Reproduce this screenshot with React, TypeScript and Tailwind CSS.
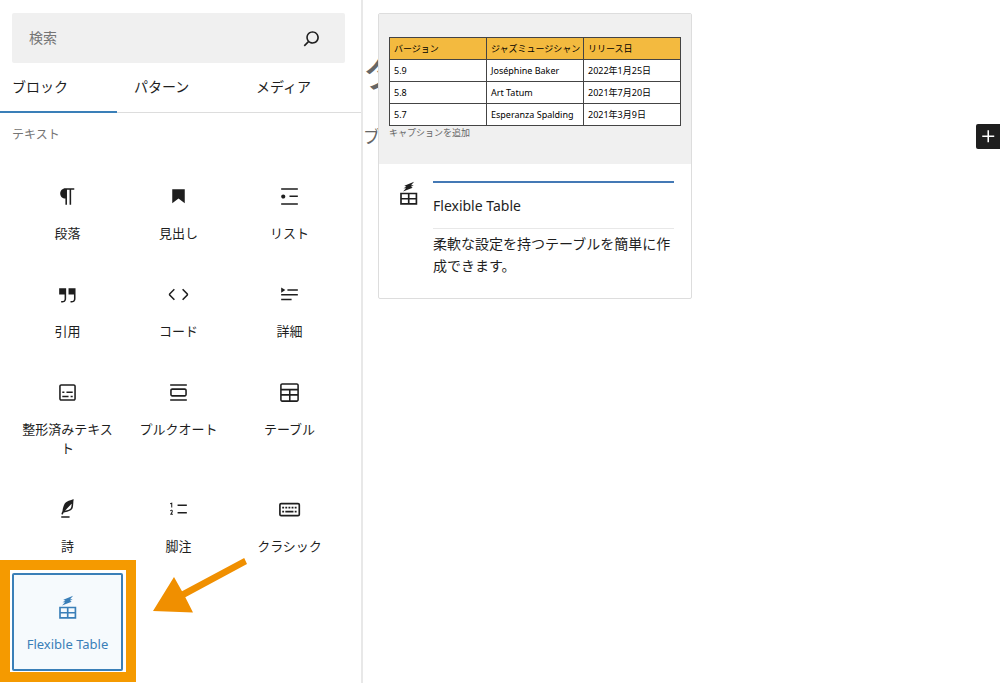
import type { ReactNode } from "react";

interface Block {
  name: string;
  icon: ReactNode;
  highlighted?: boolean;
}

function Icon({ children }: { children: ReactNode }) {
  return (
    <svg viewBox="0 0 24 24" className="size-[25px] shrink-0" fill="currentColor" aria-hidden="true">
      {children}
    </svg>
  );
}

const flexibleTableIcon = (
  <Icon>
    <path d="M17.4.6 8 4.6 10 5.4 7.2 7h2.4L6.8 10l9.2-3.6-1.6-.9L17 4h-2.6z" />
    <path d="M4 11.2h16.4v11.6H4zm1.6 1.6v3.4h5.8v-3.4zm7.4 0v3.4h5.8v-3.4zm-7.4 5v3.4h5.8v-3.4zm7.4 0v3.4h5.8v-3.4z" fillRule="evenodd" />
  </Icon>
);

const blocks: Block[] = [
  {
    name: "段落",
    icon: <Icon><path d="m9.99609 14v-.2251l.00391.0001v6.225h1.5v-14.5h2.5v14.5h1.5v-14.5h3v-1.5h-8.50391c-2.76142 0-5 2.23858-5 5 0 2.7614 2.23858 5 5 5z" /></Icon>,
  },
  { name: "見出し", icon: <Icon><path d="M6 5V18.5911L12 13.8473L18 18.5911V5H6Z" /></Icon> },
  {
    name: "リスト",
    icon: <Icon><path d="M4 4v1.5h16V4H4zm8 8.5h8V11h-8v1.5zM4 20h16v-1.5H4V20zm4-8c0-1.1-.9-2-2-2s-2 .9-2 2 .9 2 2 2 2-.9 2-2z" /></Icon>,
  },
  {
    name: "引用",
    icon: <Icon><path d="M13 6v6h5.2v4c0 .8-.2 1.4-.5 1.7-.6.6-1.6.6-2.5.5h-.3v1.5h.5c1 0 2.3-.1 3.3-1 .6-.6 1-1.6 1-2.8V6H13zm-9 6h5.2v4c0 .8-.2 1.4-.5 1.7-.6.6-1.6.6-2.5.5h-.3v1.5h.5c1 0 2.3-.1 3.3-1 .6-.6 1-1.6 1-2.8V6H4v6z" /></Icon>,
  },
  {
    name: "コード",
    icon: <Icon><path d="M20.8 10.7l-4.3-4.3-1.1 1.1 4.3 4.3c.1.1.1.3 0 .4l-4.3 4.3 1.1 1.1 4.3-4.3c.7-.8.7-1.9 0-2.6zM4.2 11.8l4.3-4.3-1-1-4.3 4.3c-.7.7-.7 1.8 0 2.5l4.3 4.3 1.1-1.1-4.3-4.3c-.2-.1-.2-.3-.1-.4z" /></Icon>,
  },
  {
    name: "詳細",
    icon: <Icon><path d="M4 16h10v1.5H4V16Zm0-4.5h16V13H4v-1.5ZM10 7h10v1.5H10V7Z" /><path d="m4 5.25 4 2.5-4 2.5v-5Z" /></Icon>,
  },
  {
    name: "整形済みテキスト",
    icon: <Icon><path d="M18 4H6c-1.1 0-2 .9-2 2v12c0 1.1.9 2 2 2h12c1.1 0 2-.9 2-2V6c0-1.1-.9-2-2-2zm.5 14c0 .3-.2.5-.5.5H6c-.3 0-.5-.2-.5-.5V6c0-.3.2-.5.5-.5h12c.3 0 .5.2.5.5v12z" /><path d="M7 16.5h6V15H7v1.5zm4-4h6V11h-6v1.5zM9 11H7v1.5h2V11zm6 5.5h2V15h-2v1.5z" /></Icon>,
  },
  {
    name: "プルクオート",
    icon: <Icon><path d="M18 8H6c-1.1 0-2 .9-2 2v4c0 1.1.9 2 2 2h12c1.1 0 2-.9 2-2v-4c0-1.1-.9-2-2-2zm.5 6c0 .3-.2.5-.5.5H6c-.3 0-.5-.2-.5-.5v-4c0-.3.2-.5.5-.5h12c.3 0 .5.2.5.5v4zM4 4v1.5h16V4H4zm0 16h16v-1.5H4V20z" /></Icon>,
  },
  {
    name: "テーブル",
    icon: <Icon><path d="M19 3H5c-1.1 0-2 .9-2 2v14c0 1.1.9 2 2 2h14c1.1 0 2-.9 2-2V5c0-1.1-.9-2-2-2zM5 4.5h14c.3 0 .5.2.5.5v3.5h-15V5c0-.3.2-.5.5-.5zm8 5.5h6.5v3.5H13V10zm-1.5 3.5h-7V10h7v3.5zm-7 5.5v-4h7v4.5H5c-.3 0-.5-.2-.5-.5zm14.5.5h-6V15h6.5v4c0 .3-.2.5-.5.5z" /></Icon>,
  },
  {
    name: "詩",
    icon: <Icon><path d="M17.8 2l-.9.3c-.1 0-3.6 1-5.2 2.1C10 5.5 9.3 6.5 8.9 7.1c-.6.9-1.7 4.7-1.7 6.3l-.9 2.3c-.2.4 0 .8.4 1 .1 0 .2.1.3.1.3 0 .6-.2.7-.5l.6-1.5c.3 0 .7-.1 1.2-.2.7-.1 1.4-.3 2.2-.5.8-.2 1.6-.5 2.4-.8.7-.3 1.4-.7 1.9-1.2s.8-1.2 1-1.9c.2-.7.3-1.6.4-2.4.1-.8.1-1.7.2-2.5 0-.8.1-1.5.2-2.1V2zm-1.9 5.6c-.1.8-.2 1.5-.3 2.1-.2.6-.4 1-.6 1.3-.3.3-.8.6-1.4.9-.7.3-1.4.5-2.2.8-.6.2-1.3.3-1.8.4L15 7.5c.3-.3.6-.7 1-1.1 0 .4 0 .8-.1 1.2zM6 20h8v-1.5H6V20z" /></Icon>,
  },
  {
    name: "脚注",
    icon: <Icon><path d="M11.1 15.8H20v-1.5h-8.9v1.5zm0-8.6v1.5H20V7.2h-8.9zM5 6.7V10h1V5.3L3.8 6l.4 1 .8-.3zm-.4 5.7c-.3.1-.5.2-.7.3l.1 1.1c.2-.2.5-.4.8-.5.3-.1.6 0 .7.1.2.3 0 .8-.2 1.1-.5.8-.9 1.6-1.4 2.5h2.7v-1h-1c.3-.6.8-1.4.9-2.1.1-.3 0-.8-.2-1.1-.5-.6-1.3-.5-1.7-.4z" /></Icon>,
  },
  {
    name: "クラシック",
    icon: (
      <Icon>
        <rect x="2.8" y="6.3" width="18.6" height="11.6" rx="1.2" fill="none" stroke="currentColor" strokeWidth="1.6" />
        <path d="M5 9.4h1.8v1.6H5zm3 0h1.8v1.6H8zm3 0h1.8v1.6H11zm3 0h1.8v1.6H14zm3 0h1.8v1.6H17zM5 13.2h1.8v1.6H5zm3 0h7.8v1.6H8zm9 0h1.8v1.6H17z" />
      </Icon>
    ),
  },
  { name: "Flexible Table", icon: flexibleTableIcon, highlighted: true },
];

const releases = [
  ["5.9", "Joséphine Baker", "2022年1月25日"],
  ["5.8", "Art Tatum", "2021年7月20日"],
  ["5.7", "Esperanza Spalding", "2021年3月9日"],
];

function BlockButton({ block }: { block: Block }) {
  return (
    <div className="relative">
      <button
        type="button"
        className={`flex h-full w-full flex-col items-center gap-[15px] rounded-[2px] px-2 pt-[22px] pb-[17px] text-[13px] leading-[19px] ${
          block.highlighted ? "bg-[#f6fafd] text-[#3a7fb8] ring-2 ring-[#3a7fb8] ring-inset" : ""
        }`}
      >
        {block.icon}
        <span>{block.name}</span>
      </button>
      {block.highlighted && (
        <>
          <div className="pointer-events-none absolute -top-[13px] -left-3 h-[122px] w-[136px] border-10 border-[#f59a00]" />
          <svg viewBox="0 0 96 56" className="pointer-events-none absolute -top-[15px] left-[140px] h-14 w-24" aria-hidden="true">
            <path d="M92.2 0 95 6 33.3 39.2 41 54.4 1 53 22 19 30 33.2z" fill="#f08f00" />
          </svg>
        </>
      )}
    </div>
  );
}

function Inserter() {
  return (
    <aside className="w-[363px] shrink-0 border-r-2 border-[#e8e8e8]">
      <div className="pt-[13px] pr-4 pl-3">
        <div className="flex h-[50px] items-center rounded-[2px] bg-[#f0f0f0] pr-[21px] pl-[17px]">
          <input
            type="text"
            aria-label="検索"
            placeholder="検索"
            className="min-w-0 flex-1 bg-transparent pb-0.5 text-[14px] outline-none placeholder:text-[#757575]"
          />
          <button type="button" aria-label="検索">
            <Icon>
              <path d="M13 5c-3.3 0-6 2.7-6 6 0 1.4.5 2.7 1.3 3.7l-3.8 3.8 1.1 1.1 3.8-3.8c1 .8 2.3 1.3 3.7 1.3 3.3 0 6-2.7 6-6S16.3 5 13 5zm0 10.5c-2.5 0-4.5-2-4.5-4.5s2-4.5 4.5-4.5 4.5 2 4.5 4.5-2 4.5-4.5 4.5z" />
            </Icon>
          </button>
        </div>
      </div>

      <div role="tablist" className="grid h-[50px] grid-cols-3 gap-[5px] border-b border-[#ddd] text-[14px]">
        <button type="button" role="tab" aria-selected="true" className="-mb-px border-b-2 border-[#3a7fb8] pb-0.5 pl-3 text-left">
          ブロック
        </button>
        <button type="button" role="tab" aria-selected="false" className="pb-0.5 pl-3 text-left">パターン</button>
        <button type="button" role="tab" aria-selected="false" className="pb-0.5 pl-3 text-left">メディア</button>
      </div>

      <h2 className="px-3 pt-3 pb-[17px] text-[12px] leading-5 text-[#757575]">テキスト</h2>
      <div className="grid grid-cols-3 pr-4 pl-3">
        {blocks.map((block) => (
          <BlockButton key={block.name} block={block} />
        ))}
      </div>
    </aside>
  );
}

function PreviewCard() {
  return (
    <div className="absolute top-[13px] left-[15px] w-[314px] rounded-[2px] border border-[#ddd] bg-white">
      <div className="bg-[#f0f0f0] px-2.5 pt-[23px] pb-6 text-[9px]">
        <table className="w-full table-fixed border-collapse bg-white text-left text-black">
          <thead>
            <tr className="h-[22px] bg-[#f3ba3f]">
              <th className="border border-[#444] px-1 font-normal whitespace-nowrap">バージョン</th>
              <th className="border border-[#444] px-1 font-normal whitespace-nowrap">ジャズミュージシャン</th>
              <th className="border border-[#444] px-1 font-normal whitespace-nowrap">リリース日</th>
            </tr>
          </thead>
          <tbody>
            {releases.map((row) => (
              <tr key={row[0]} className="h-[22px]">
                {row.map((cell) => (
                  <td key={cell} className="border border-[#444] px-1 whitespace-nowrap">{cell}</td>
                ))}
              </tr>
            ))}
          </tbody>
        </table>
        <p className="leading-[14px] text-[#666]">キャプションを追加</p>
      </div>
      <div className="flex gap-3 px-[17px] pt-[17px] pb-[21px]">
        {flexibleTableIcon}
        <div className="min-w-0 flex-1">
          <h2 className="border-t-2 border-b border-t-[#4479b5] border-b-[#e8e8e8] text-[14px] leading-[45px]">Flexible Table</h2>
          <p className="pt-1 text-[14px] leading-[22px]">柔軟な設定を持つテーブルを簡単に作成できます。</p>
        </div>
      </div>
    </div>
  );
}

export default function App() {
  return (
    <div className="flex min-h-screen bg-white font-['Noto_Sans','Noto_Sans_CJK_JP',sans-serif] text-[#1e1e1e]">
      <Inserter />
      <main className="relative min-w-0 flex-1 overflow-hidden pt-[46px]">
        <h1 className="w-4 overflow-hidden text-[40px] leading-[52px] font-medium text-[#666]">タ</h1>
        <div className="mt-[25px] flex h-[26px] items-center justify-between">
          <p className="w-4 overflow-hidden pt-0.5 text-[17px] text-[#666]">ブ</p>
          <button type="button" aria-label="ブロックを追加" className="flex h-[25px] w-6 items-center justify-center rounded-l-[2px] bg-[#1e1e1e] text-white">
            <Icon>
              <path d="M11 12.5V17.5H12.5V12.5H17.5V11H12.5V6H11V11H6V12.5H11Z" />
            </Icon>
          </button>
        </div>
        <PreviewCard />
      </main>
    </div>
  );
}
